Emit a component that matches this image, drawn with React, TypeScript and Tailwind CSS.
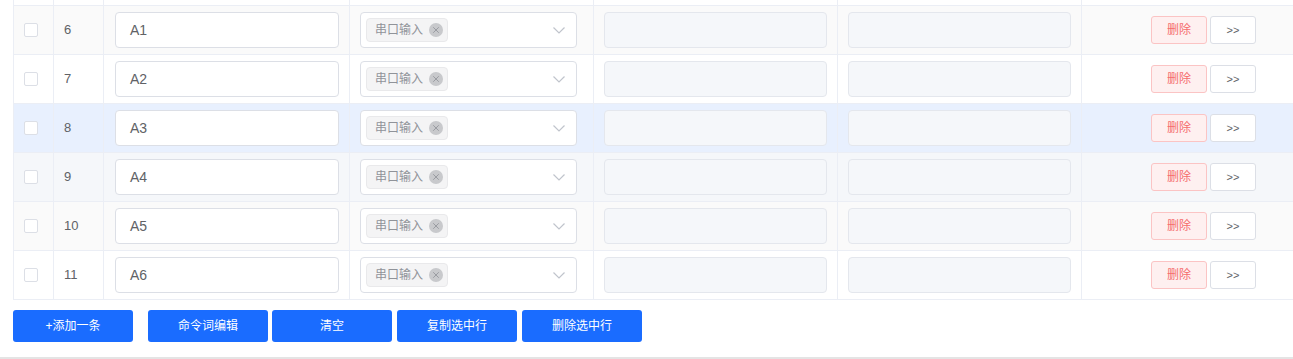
import { X } from "lucide-react";

type Row = { no: number; value: string; bg: string };

const rows: Row[] = [
  { no: 6, value: "A1", bg: "bg-[#fafafa]" },
  { no: 7, value: "A2", bg: "bg-white" },
  { no: 8, value: "A3", bg: "bg-[#e8f0fe]" },
  { no: 9, value: "A4", bg: "bg-[#f5f7fa]" },
  { no: 10, value: "A5", bg: "bg-[#fafafa]" },
  { no: 11, value: "A6", bg: "bg-white" },
];

const cols = "grid grid-cols-[40px_50px_246px_244px_244px_244px_1fr]";
const cell = "border-r border-[#ebeef5] flex items-center";
const blueBtn =
  "flex h-[32px] w-[120px] items-center justify-center rounded-[3px] bg-[#1a6cff] text-[12px] text-white";

function TableRow({ row }: { row: Row }) {
  return (
    <div className={`${cols} h-[49px] border-b border-[#ebeef5] ${row.bg}`}>
      <div className={`${cell} pl-[10px]`}>
        <span className="h-[14px] w-[14px] rounded-[2px] border border-[#dcdfe6] bg-white" />
      </div>
      <div className={`${cell} pl-[10px] text-[13px] text-[#606266]`}>{row.no}</div>
      <div className={`${cell} pl-[11px]`}>
        <div className="flex h-[36px] w-[224px] items-center rounded-[4px] border border-[#dcdfe6] bg-white pl-[14px] text-[14px] text-[#606266]">
          {row.value}
        </div>
      </div>
      <div className={`${cell} pl-[10px]`}>
        <div className="flex h-[36px] w-[217px] items-center rounded-[4px] border border-[#dcdfe6] bg-white pl-[5px] pr-[11px]">
          <span className="flex h-[24px] items-center gap-[6px] rounded-[4px] border border-[#e9e9eb] bg-[#f4f4f5] pl-[8px] pr-[4px] text-[12px] text-[#909399]">
            串口输入
            <span className="flex h-[14px] w-[14px] items-center justify-center rounded-full bg-[#c8c9cc]">
              <X size={10} strokeWidth={2} className="text-[#909399]" />
            </span>
          </span>
          <svg width="12" height="7" viewBox="0 0 12 7" className="ml-auto" fill="none">
            <polyline points="0.5,0.5 6,6 11.5,0.5" stroke="#c0c4cc" strokeWidth="1.2" />
          </svg>
        </div>
      </div>
      <div className={`${cell} pl-[10px]`}>
        <div className="h-[36px] w-[223px] rounded-[4px] border border-[#e4e7ed] bg-[#f5f7fa]" />
      </div>
      <div className={`${cell} pl-[10px]`}>
        <div className="h-[36px] w-[223px] rounded-[4px] border border-[#e4e7ed] bg-[#f5f7fa]" />
      </div>
      <div className="flex items-center gap-[3px] pl-[69px]">
        <button className="flex h-[28px] w-[56px] items-center justify-center rounded-[3px] border border-[#fbc4c4] bg-[#fef0f0] text-[12px] text-[#f56c6c]">
          删除
        </button>
        <button className="flex h-[28px] w-[46px] items-center justify-center rounded-[3px] border border-[#dcdfe6] bg-white text-[11px] text-[#606266]">
          &gt;&gt;
        </button>
      </div>
    </div>
  );
}

export default function App() {
  return (
    <div
      className="h-[359px] w-full overflow-hidden bg-white"
      style={{ fontFamily: '"Liberation Sans", "Noto Sans CJK SC", sans-serif' }}
    >
      <div className="ml-[13px] border-l border-[#ebeef5]">
        <div className={`${cols} h-[6px] border-b border-[#ebeef5]`}>
          <div className="border-r border-[#ebeef5]" />
          <div className="border-r border-[#ebeef5]" />
          <div className="border-r border-[#ebeef5]" />
          <div className="border-r border-[#ebeef5]" />
          <div className="border-r border-[#ebeef5]" />
          <div className="border-r border-[#ebeef5]" />
          <div />
        </div>
        {rows.map((row) => (
          <TableRow key={row.no} row={row} />
        ))}
      </div>

      <div className="flex pb-[15px] pl-[13px] pt-[10px]">
        <button className={blueBtn}>+添加一条</button>
        <button className={`${blueBtn} ml-[15px]`}>命令词编辑</button>
        <button className={`${blueBtn} ml-[4px]`}>清空</button>
        <button className={`${blueBtn} ml-[5px]`}>复制选中行</button>
        <button className={`${blueBtn} ml-[5px]`}>删除选中行</button>
      </div>
      <div className="border-t-2 border-[#e4e4e4]" />
    </div>
  );
}
